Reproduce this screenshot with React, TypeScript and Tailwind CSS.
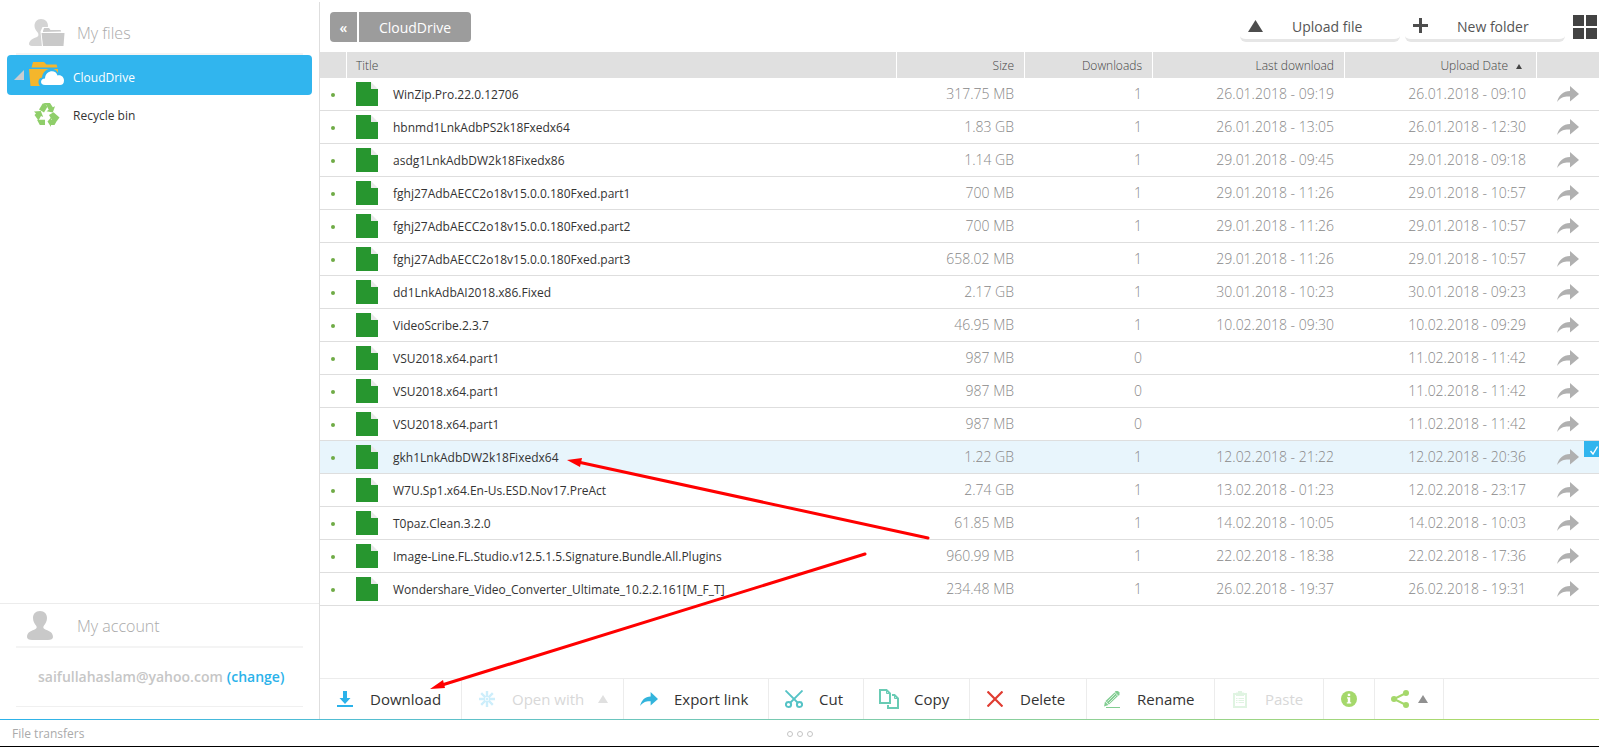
import React from "react";

type FileRow = {
  name: string;
  size: string;
  downloads: string;
  last: string;
  uploaded: string;
  selected?: boolean;
};

const files: FileRow[] = [
  { name: "WinZip.Pro.22.0.12706", size: "317.75 MB", downloads: "1", last: "26.01.2018 - 09:19", uploaded: "26.01.2018 - 09:10" },
  { name: "hbnmd1LnkAdbPS2k18Fxedx64", size: "1.83 GB", downloads: "1", last: "26.01.2018 - 13:05", uploaded: "26.01.2018 - 12:30" },
  { name: "asdg1LnkAdbDW2k18Fixedx86", size: "1.14 GB", downloads: "1", last: "29.01.2018 - 09:45", uploaded: "29.01.2018 - 09:18" },
  { name: "fghj27AdbAECC2o18v15.0.0.180Fxed.part1", size: "700 MB", downloads: "1", last: "29.01.2018 - 11:26", uploaded: "29.01.2018 - 10:57" },
  { name: "fghj27AdbAECC2o18v15.0.0.180Fxed.part2", size: "700 MB", downloads: "1", last: "29.01.2018 - 11:26", uploaded: "29.01.2018 - 10:57" },
  { name: "fghj27AdbAECC2o18v15.0.0.180Fxed.part3", size: "658.02 MB", downloads: "1", last: "29.01.2018 - 11:26", uploaded: "29.01.2018 - 10:57" },
  { name: "dd1LnkAdbAI2018.x86.Fixed", size: "2.17 GB", downloads: "1", last: "30.01.2018 - 10:23", uploaded: "30.01.2018 - 09:23" },
  { name: "VideoScribe.2.3.7", size: "46.95 MB", downloads: "1", last: "10.02.2018 - 09:30", uploaded: "10.02.2018 - 09:29" },
  { name: "VSU2018.x64.part1", size: "987 MB", downloads: "0", last: "", uploaded: "11.02.2018 - 11:42" },
  { name: "VSU2018.x64.part1", size: "987 MB", downloads: "0", last: "", uploaded: "11.02.2018 - 11:42" },
  { name: "VSU2018.x64.part1", size: "987 MB", downloads: "0", last: "", uploaded: "11.02.2018 - 11:42" },
  { name: "gkh1LnkAdbDW2k18Fixedx64", size: "1.22 GB", downloads: "1", last: "12.02.2018 - 21:22", uploaded: "12.02.2018 - 20:36", selected: true },
  { name: "W7U.Sp1.x64.En-Us.ESD.Nov17.PreAct", size: "2.74 GB", downloads: "1", last: "13.02.2018 - 01:23", uploaded: "12.02.2018 - 23:17" },
  { name: "T0paz.Clean.3.2.0", size: "61.85 MB", downloads: "1", last: "14.02.2018 - 10:05", uploaded: "14.02.2018 - 10:03" },
  { name: "Image-Line.FL.Studio.v12.5.1.5.Signature.Bundle.All.Plugins", size: "960.99 MB", downloads: "1", last: "22.02.2018 - 18:38", uploaded: "22.02.2018 - 17:36" },
  { name: "Wondershare_Video_Converter_Ultimate_10.2.2.161[M_F_T]", size: "234.48 MB", downloads: "1", last: "26.02.2018 - 19:37", uploaded: "26.02.2018 - 19:31" },
];

const MyFilesIcon = () => (
  <svg width="36" height="28" viewBox="0 0 36 28" className="block">
    <path d="M12 0c4.500 0 7 3 7 7 0 3-1.500 5-2.500 6.500-1 1.500-.5 3 1 3.500V27H3c-3 0-3.500-2-2.500-4 1.500-3 5-4 7.500-5 1.800-.8 1.700-3 .7-4.500C7.500 12 5.500 10 5.500 7c0-4 2.500-7 6.500-7z" fill="#d4d4d4" />
    <path d="M11.500 12.500l2-4.500h7l1.500 2h10.500l1.500 3h1.500L34 28H13L11.500 12.500z" fill="#fff" />
    <path d="M14 12l1-3h5l1.500 2h10l.7 1.500L14 13z" fill="#cbcbcb" />
    <path d="M12.500 14H35.500L34.500 27h-20.500z" fill="#c9c9c9" />
  </svg>
);

const DriveIcon = () => (
  <svg width="36" height="26" viewBox="0 0 36 26" className="block">
    <path d="M2.500 5.500L4 0h11l2.500 2.500h10L28.500 5.500z" fill="#f4b62c" />
    <path d="M0 7h29v17H1.500z" fill="#f4b62c" />
    <path d="M15 26c-7-1-7-10-2-10.500C14 5 27 4 29.500 12c5 0 7 4 6.500 7v7z" fill="#31b5ee" />
    <path d="M16 23c-5.500 0-5-6.500 0-6.500.5-8.500 11-9.500 12.500-3 4-1 6.500 2 6.500 5s-1.500 4.500-4 4.500z" fill="#fff" />
  </svg>
);

const RecycleIcon = () => (
  <svg width="26" height="24" viewBox="0 0 26 24" className="block" fill="#8fce6a">
    <path d="M9.500 0h6.500l2.800 4.200 2.200-1-2.200 6.300-6.300-1.300 2.200-1.400L12.300 2z" />
    <path d="M8.700.6L5 6.500l5 3L13.300 4 11.300.6z" />
    <path d="M19.500 9.200L15 12l3.200 5.500h5L25.500 14.500z" />
    <path d="M13.500 18.500l3.500-4v2.200h6.500L20.500 22H17v2z" />
    <path d="M0 8.500l6.800-.5 2.400 6-2.200-1-2.500 4.500L.5 12l1.500-1.500z" />
    <path d="M3 16.700h8v5.300H5.800z" />
  </svg>
);

const PersonIcon = () => (
  <svg width="26" height="29" viewBox="0 0 26 29" className="block" fill="#c9c9c9">
    <path d="M13 0c4.500 0 7 3 7 7 0 3-1.500 5.500-3 7.500-1 1.500-1 2.500.5 3.500C21 20 26 20.500 26 26c0 2-2 3-5 3H5c-3 0-5-1-5-3 0-5.500 5-6 8.500-8 1.500-1 1.500-2 .5-3.500C7.500 12.500 6 10 6 7c0-4 2.500-7 7-7z" />
  </svg>
);

const FileIcon = () => (
  <svg width="22" height="24" viewBox="0 0 22 24" className="block">
    <path d="M0 0h15v7h7v17H0z" fill="#27962f" />
    <path d="M15 0l7 7h-7z" fill="#e9e9e9" />
  </svg>
);

const ShareArrow = ({ color, width, height }: { color: string; width: number; height: number }) => (
  <svg width={width} height={height} viewBox="0 0 22 16" preserveAspectRatio="none" className="block">
    <path d="M0 16C2 9 6 5 13 5V0l9 8-9 7.500V10.500C8 10.200 4 11 0 16z" fill={color} />
  </svg>
);

const Up = ({ width, height, color }: { width: number; height: number; color: string }) => (
  <svg width={width} height={height} viewBox="0 0 10 8" preserveAspectRatio="none" className="block">
    <path d="M5 0l5 8H0z" fill={color} />
  </svg>
);

const DownloadIcon = () => (
  <svg width="16" height="16" viewBox="0 0 16 16" className="block" fill="#2bb2ea">
    <path d="M6 0h4v7h3.500L8 13 2.500 7H6zM0 14h16v2H0z" />
  </svg>
);

const BurstIcon = () => (
  <svg width="16" height="16" viewBox="0 0 16 16" className="block" stroke="#cdeefb" strokeWidth="2.400">
    <path d="M8 0v6M8 10V16M0 8h6M10 8H16M2.200 2.200l4.300 4.300M9.500 9.500l4.300 4.300M13.800 2.200l-4.300 4.300M6.500 9.500l-4.300 4.300" />
    <circle cx="8" cy="8" r="1.500" stroke="none" fill="#cdeefb" />
  </svg>
);

const CutIcon = () => (
  <svg width="18" height="18" viewBox="0 0 18 18" className="block" fill="none" stroke="#55c3c6">
    <path d="M.5.500L13 13M17.500.5L5 13" strokeWidth="1.800" />
    <ellipse cx="3.500" cy="14.500" rx="2.600" ry="2.500" strokeWidth="2" />
    <ellipse cx="14.500" cy="14.500" rx="2.600" ry="2.500" strokeWidth="2" />
  </svg>
);

const CopyIcon = () => (
  <svg width="20" height="20" viewBox="0 0 20 20" className="block" fill="none" stroke="#69cbb4" strokeWidth="2">
    <path d="M1 1h6.500L11 4.500V14H1z" />
    <path d="M7.500 1v3.500H11" strokeWidth="1" />
    <path d="M13 6h2.500L19 9.500V19H9v-3" />
    <path d="M15.500 6v3.500H19" strokeWidth="1" />
  </svg>
);

const DeleteIcon = () => (
  <svg width="16" height="16" viewBox="0 0 16 16" className="block" stroke="#e03c31" strokeWidth="2.200">
    <path d="M.5.500l15 15M15.500.5l-15 15" />
  </svg>
);

const RenameIcon = () => (
  <svg width="16" height="17" viewBox="0 0 16 17" className="block" fill="#82cd92">
    <path d="M10.500 1.500L14 5 5 13.500 1.500 10z" />
    <path d="M11.500 0h2.500l1.500 1.500V4L14.500 4.800 10.800 1z" />
    <path d="M1 10.500L4.500 14 0 15.500z" />
    <path d="M11 3L3.500 10.500M12.500 4.500L5 12" stroke="#fff" strokeWidth=".7" />
    <path d="M2 16h14v1H2z" />
  </svg>
);

const PasteIcon = () => (
  <svg width="14" height="17" viewBox="0 0 14 17" className="block" fill="none" stroke="#e0f4e2">
    <path d="M1 3h12v13H1z" strokeWidth="2" />
    <path d="M3 1.500h8V5H3z" fill="#e0f4e2" stroke="none" />
    <path d="M5 0h4v2H5z" fill="#e0f4e2" stroke="none" />
    <path d="M3 7.500h1.500M5.500 7.500H11M3 9.500h1.500M5.500 9.500H11M3 11.500h1.500M5.500 11.500H11" />
  </svg>
);

const InfoIcon = () => (
  <svg width="16" height="16" viewBox="0 0 16 16" className="block">
    <circle cx="8" cy="8" r="8" fill="#a5d86b" />
    <path d="M6.800 2.800h2.400v2.200H6.800zM6 6.200h3.200v5h1V12.500H5.800v-1.300h1V7.500H6z" fill="#fff" />
  </svg>
);

const NodesIcon = () => (
  <svg width="18" height="18" viewBox="0 0 18 18" className="block" fill="#a5d86b">
    <path d="M15 3L3 9l12 6" fill="none" stroke="#a5d86b" strokeWidth="2" />
    <circle cx="3" cy="9" r="3" />
    <circle cx="15" cy="3" r="3" />
    <circle cx="15" cy="15" r="3" />
  </svg>
);

const th = "border-r border-white pt-[2px] pr-[10px] text-right font-light";
const cell = "border-b border-[#dedede]";
const td = "border-b border-[#dedede] pr-[11px] text-right text-[14px] leading-5 font-light text-[#888]";
const tool = "flex h-full items-center border-r border-[#ececec] text-[15px] leading-5";
const topButton =
  "flex h-[30px] w-40 items-center rounded-md border-b-3 border-[#e6e6e6] text-[14px] leading-5 text-[#555]";

export default function App() {
  return (
    <div className="relative flex min-h-screen flex-col overflow-hidden bg-white font-['Open_Sans',sans-serif] text-[#333]">
      <div className="flex grow">
        <aside className="mt-[2px] flex w-80 shrink-0 flex-col border-r border-[#dedede]">
          <div className="mx-4 flex h-[53px] items-center border-b-2 border-[#f4f4f4] pt-[10px] pl-[13px]">
            <MyFilesIcon />
            <h2 className="pl-3 text-[16px] font-light text-[#aaa]">My files</h2>
          </div>
          <nav className="px-[7px] text-[12px] leading-5">
            <a href="#drive" className="flex h-10 items-center rounded bg-[#31b5ee] pl-[7px] text-white">
              <svg width="10" height="10" viewBox="0 0 10 10" className="block">
                <path d="M10 0v10H0z" fill="#c9cdd0" />
              </svg>
              <span className="ml-[5px]"><DriveIcon /></span>
              <span className="pt-[6px] pl-2 font-medium">CloudDrive</span>
            </a>
            <a href="#bin" className="flex h-10 items-center pl-[27px] text-[#333]">
              <RecycleIcon />
              <span className="pt-[2px] pl-[13px]">Recycle bin</span>
            </a>
          </nav>
          <section className="mt-auto border-t border-[#ececec]">
            <div className="mx-4 flex h-[44px] items-center border-b-2 border-[#f4f4f4] pl-[11px]">
              <PersonIcon />
              <h2 className="pt-[2px] pl-6 text-[16px] font-light text-[#aaa]">My account</h2>
            </div>
            <p className="mx-4 mb-3 flex h-[59px] items-center gap-1 border-b border-[#f0f0f0] pb-[2px] pl-[22px] text-[14px] font-semibold text-[#c6c6c6]">
              saifullahaslam@yahoo.com
              <a href="#change" className="text-[#2bb2ea]">(change)</a>
            </p>
          </section>
        </aside>

        <main className="flex min-w-0 grow flex-col">
          <header className="flex h-[52px] items-center justify-between pt-[2px] pl-[10px]">
            <div className="flex h-[30px] gap-[2px] text-white">
              <button aria-label="Back" className="w-[27px] rounded-l bg-[#9c9c9c] text-[14px] font-semibold">«</button>
              <button className="w-28 rounded-r bg-[#9c9c9c] text-[14px]">CloudDrive</button>
            </div>
            <div className="flex items-center pr-[2px]">
              <button className={topButton}>
                <span className="pl-2"><Up width={15} height={12} color="#4d4d4d" /></span>
                <span className="pt-[2px] pl-[29px]">Upload file</span>
              </button>
              <button className={`${topButton} ml-[5px]`}>
                <svg width="15" height="15" viewBox="0 0 15 15" className="ml-2 block">
                  <path d="M6 0h3v6h6v3H9v6H6V9H0V6h6z" fill="#4d4d4d" />
                </svg>
                <span className="pt-[2px] pl-[29px]">New folder</span>
              </button>
              <button aria-label="Grid view" className="ml-2">
                <svg width="24" height="24" viewBox="0 0 24 24" className="block">
                  <path d="M0 0h11v11H0zM13 0h11v11H13zM0 13h11v11H0zM13 13h11v11H13z" fill="#434343" />
                </svg>
              </button>
            </div>
          </header>

          <table className="w-full table-fixed border-separate border-spacing-0">
            <colgroup>
              <col className="w-[27px]" />
              <col />
              <col className="w-32" />
              <col className="w-32" />
              <col className="w-48" />
              <col className="w-48" />
              <col className="w-[62px]" />
            </colgroup>
            <thead>
              <tr className="h-[26px] bg-[#e0e0e0] text-[12px] leading-4 text-[#444]">
                <th className="border-r border-white" />
                <th className="border-r border-white pt-[2px] pl-[9px] text-left font-light">Title</th>
                <th className={th}>Size</th>
                <th className={th}>Downloads</th>
                <th className={th}>Last download</th>
                <th className={th}>
                  <span className="flex items-center justify-end gap-2 pr-1">
                    Upload Date <Up width={6} height={5} color="#444" />
                  </span>
                </th>
                <th />
              </tr>
            </thead>
            <tbody>
              {files.map((file, i) => (
                <tr key={i} className={`h-[33px] ${file.selected ? "bg-[#e8f5fc]" : ""}`}>
                  <td className={`${cell} pt-[2px] pr-[2px]`}>
                    <span className="mx-auto block size-1 rounded-full bg-[#6fab46]" />
                  </td>
                  <td className={`${cell} pl-[9px]`}>
                    <div className="flex items-center gap-[15px] text-[12px] leading-4 whitespace-nowrap">
                      <FileIcon />
                      <span className="pt-[2px]">{file.name}</span>
                    </div>
                  </td>
                  <td className={td}>{file.size}</td>
                  <td className={td}>{file.downloads}</td>
                  <td className={td}>{file.last}</td>
                  <td className={td}>{file.uploaded}</td>
                  <td className={`${cell} relative pl-[20px]`}>
                    <button aria-label="Share" className="block"><ShareArrow color="#b0b0b0" width={22} height={16} /></button>
                    {file.selected && (
                      <span className="absolute top-0 right-0 flex h-4 w-[15px] items-center justify-center bg-[#31b5ee] pt-[2px] pl-1">
                        <svg width="8" height="9" viewBox="0 0 8 9">
                          <path d="M.5 5l2.500 3L7.500.5" fill="none" stroke="#fff" strokeWidth="1.400" />
                        </svg>
                      </span>
                    )}
                  </td>
                </tr>
              ))}
            </tbody>
          </table>

          <div className="mt-auto flex h-[41px] items-center border-t border-[#ececec] text-[#333]">
            <button className={`${tool} w-[142px] pl-[17px]`}><DownloadIcon /><span className="pl-[17px]">Download</span></button>
            <button disabled className={`${tool} w-[162px] pl-[17px] text-[#d8d8d8]`}>
              <BurstIcon /><span className="pr-[14px] pl-[17px]">Open with</span><Up width={10} height={8} color="#e0e0e0" />
            </button>
            <button className={`${tool} w-[145px] pl-4`}><ShareArrow color="#33b4dc" width={18} height={14} /><span className="pl-4">Export link</span></button>
            <button className={`${tool} w-[95px] pl-4`}><CutIcon /><span className="pl-4">Cut</span></button>
            <button className={`${tool} w-[106px] pl-[15px]`}><CopyIcon /><span className="pl-[15px]">Copy</span></button>
            <button className={`${tool} w-[117px] pl-[17px]`}><DeleteIcon /><span className="pl-[17px]">Delete</span></button>
            <button className={`${tool} w-32 pl-[17px]`}><RenameIcon /><span className="pl-[17px]">Rename</span></button>
            <button disabled className={`${tool} w-[109px] pl-[18px] text-[#d8d8d8]`}><PasteIcon /><span className="pl-[18px]">Paste</span></button>
            <button aria-label="Info" className={`${tool} w-[51px] pl-[17px]`}><InfoIcon /></button>
            <button aria-label="Share options" className={`${tool} w-[69px] gap-[9px] pl-4`}><NodesIcon /><Up width={10} height={8} color="#909090" /></button>
          </div>
        </main>
      </div>

      <div className="h-px bg-linear-to-r from-[#2bb2ea] to-[#b4dc5a]" />
      <footer className="grid h-[27px] grid-cols-[1fr_auto_1fr] items-center border-b border-black pt-[2px] text-[12px] text-[#aaa]">
        <span className="pl-3">File transfers</span>
        <span className="flex gap-1">
          <i className="size-[6px] rounded-full border border-[#c4c4c4]" />
          <i className="size-[6px] rounded-full border border-[#c4c4c4]" />
          <i className="size-[6px] rounded-full border border-[#c4c4c4]" />
        </span>
      </footer>

      <svg width="1599" height="747" viewBox="0 0 1599 747" className="pointer-events-none absolute top-0 left-0" fill="red" stroke="red">
        <path d="M928 538L578 462M865 554L442 685" strokeWidth="3" strokeLinecap="round" fill="none" />
        <path d="M567 460l15-2-2 9zM430 689l13-9 2 8z" stroke="none" />
      </svg>
    </div>
  );
}
